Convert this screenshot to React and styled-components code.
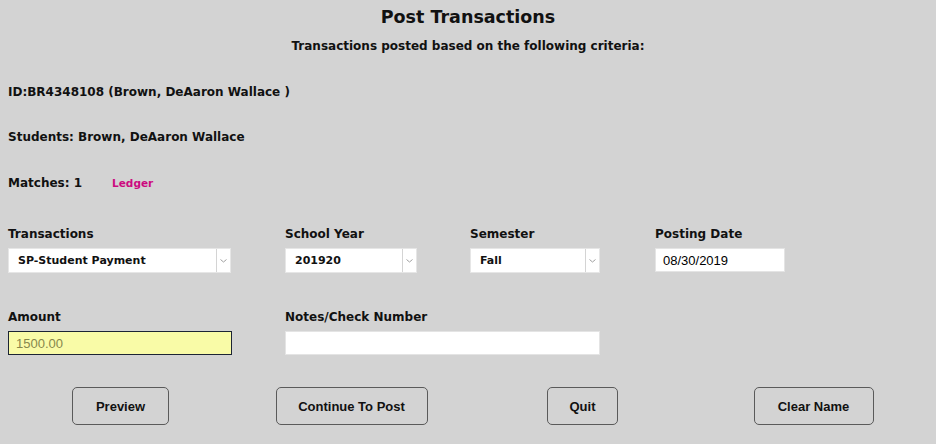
import React from "react";
import styled, { createGlobalStyle } from "styled-components";

const Global = createGlobalStyle`
  html, body { margin: 0; padding: 0; background: #d3d3d3; }
  body { font-family: "DejaVu Sans", "Liberation Sans", sans-serif; color: #111; }
`;

const Page = styled.div`
  width: 936px;
  height: 444px;
  box-sizing: border-box;
  padding: 5px 8px 0 8px;
  display: flex;
  flex-direction: column;
  font-family: "DejaVu Sans", sans-serif;
  font-weight: bold;
`;

const Title = styled.h1`
  margin: 0;
  font-size: 17.5px;
  line-height: 24px;
  text-align: center;
  font-weight: bold;
`;

const Subtitle = styled.div`
  margin-top: 9px;
  font-size: 12px;
  line-height: 16px;
  text-align: center;
`;

const InfoLine = styled.div`
  margin-top: ${(p) => p.$gap}px;
  font-size: 12px;
  line-height: 16px;
  display: flex;
  align-items: baseline;
`;

const LedgerLink = styled.a`
  margin-left: 30px;
  color: #cc0a80;
  font-size: 10.5px;
  text-decoration: none;
`;

const FormGrid = styled.div`
  margin-top: 35px;
  display: grid;
  grid-template-columns: 277px 185px 185px 1fr;
  row-gap: 36px;
`;

const Field = styled.div`
  display: flex;
  flex-direction: column;
  gap: 6px;
  grid-column: span ${(p) => p.$span || 1};
`;

const Label = styled.label`
  font-size: 12px;
  line-height: 16px;
`;

const SelectBox = styled.div`
  width: ${(p) => p.$w}px;
  height: 25px;
  box-sizing: border-box;
  background: #fff;
  border: 1px solid #e6e6e6;
  display: flex;
  align-items: stretch;
`;

const SelectValue = styled.div`
  flex: 1;
  padding-left: 9px;
  font-size: 11px;
  display: flex;
  align-items: center;
`;

const SelectArrow = styled.div`
  width: 13px;
  border-left: 1px solid #d4d4d4;
  display: flex;
  align-items: center;
  justify-content: center;
`;

const TextInput = styled.div`
  width: ${(p) => p.$w}px;
  height: ${(p) => p.$h || 24}px;
  box-sizing: border-box;
  background: ${(p) => (p.$yellow ? "#f9fba7" : "#fff")};
  border: ${(p) => (p.$yellow ? "1.5px solid #1c2434" : "1px solid #e4e4e4")};
  font-family: "Liberation Sans", Arial, sans-serif;
  font-weight: normal;
  font-size: 13px;
  color: ${(p) => (p.$yellow ? "#86874c" : "#000")};
  padding-left: 7px;
  display: flex;
  align-items: center;
`;

const ButtonRow = styled.div`
  margin-top: 32px;
  margin-left: -3px;
  display: grid;
  grid-template-columns: repeat(4, 231px);
  justify-items: center;
`;

const Button = styled.button`
  width: ${(p) => p.$w}px;
  height: 38px;
  background: transparent;
  border: 1px solid #5a5a5a;
  border-radius: 5px;
  font-family: "Liberation Sans", Arial, sans-serif;
  font-weight: bold;
  font-size: 13px;
  color: #111;
  padding: 0;
`;

const Chevron = () => (
  <svg width="7" height="4" viewBox="0 0 7 4">
    <path d="M0.5 0.5 L3.5 3 L6.5 0.5" fill="none" stroke="#a0a0a0" strokeWidth="1" />
  </svg>
);

const Select = ({ w, value }) => (
  <SelectBox $w={w}>
    <SelectValue>{value}</SelectValue>
    <SelectArrow>
      <Chevron />
    </SelectArrow>
  </SelectBox>
);

export default function App() {
  return (
    <>
      <Global />
      <Page>
        <Title>Post Transactions</Title>
        <Subtitle>Transactions posted based on the following criteria:</Subtitle>
        <InfoLine $gap={30}>ID:BR4348108 (Brown, DeAaron Wallace )</InfoLine>
        <InfoLine $gap={29}>Students: Brown, DeAaron Wallace</InfoLine>
        <InfoLine $gap={30}>
          Matches: 1<LedgerLink>Ledger</LedgerLink>
        </InfoLine>
        <FormGrid>
          <Field>
            <Label>Transactions</Label>
            <Select w={223} value="SP-Student Payment" />
          </Field>
          <Field>
            <Label>School Year</Label>
            <Select w={132} value="201920" />
          </Field>
          <Field>
            <Label>Semester</Label>
            <Select w={130} value="Fall" />
          </Field>
          <Field>
            <Label>Posting Date</Label>
            <TextInput $w={130}>08/30/2019</TextInput>
          </Field>
          <Field>
            <Label>Amount</Label>
            <TextInput $w={224} $yellow>1500.00</TextInput>
          </Field>
          <Field $span={2}>
            <Label>Notes/Check Number</Label>
            <TextInput $w={315} />
          </Field>
        </FormGrid>
        <ButtonRow>
          <Button $w={97}>Preview</Button>
          <Button $w={152}>Continue To Post</Button>
          <Button $w={71}>Quit</Button>
          <Button $w={120}>Clear Name</Button>
        </ButtonRow>
      </Page>
    </>
  );
}
